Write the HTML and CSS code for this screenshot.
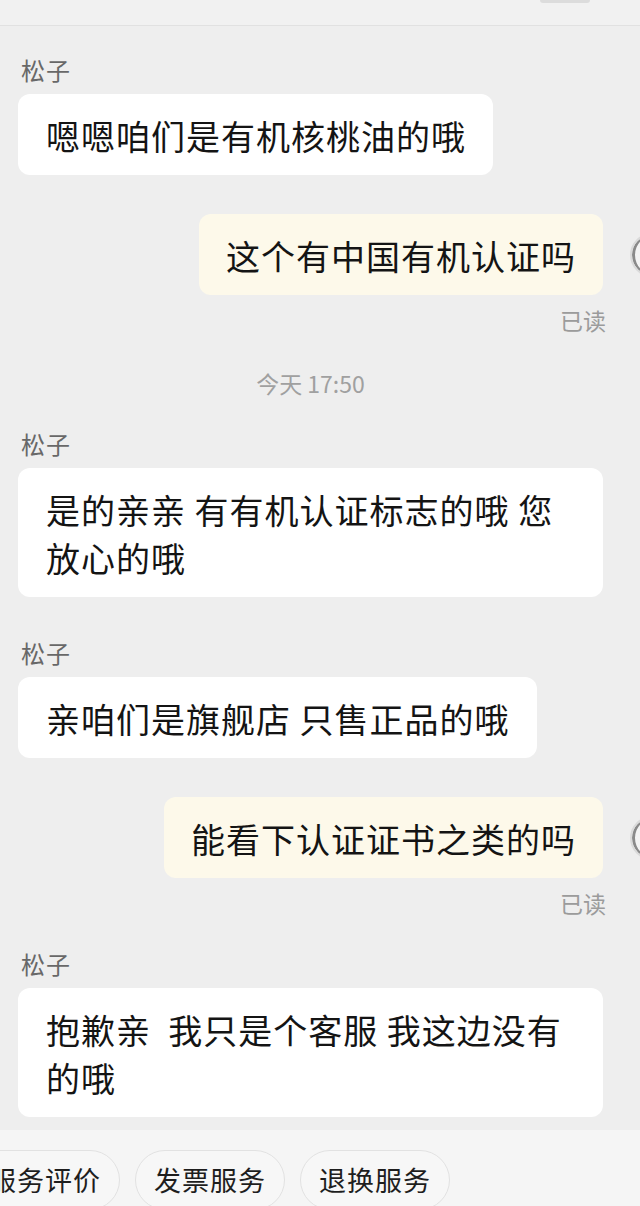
FILE: index.html
```html
<!DOCTYPE html>
<html lang="zh-CN">
<head>
<meta charset="utf-8">
<title>松子</title>
<link rel="stylesheet" href="styles.css">
</head>
<body>
<div class="app">
  <header class="topbar"><span class="topbar-tab"></span></header>
  <main class="chat">
    <div class="msg msg-in first">
      <div class="name">松子</div>
      <div class="bubble">嗯嗯咱们是有机核桃油的哦</div>
    </div>
    <div class="msg msg-out gap-md">
      <div class="row">
        <div class="bubble bubble-out">这个有中国有机认证吗</div>
        <span class="avatar"></span>
      </div>
      <div class="read">已读</div>
    </div>
    <div class="time">今天 17:50</div>
    <div class="msg msg-in gap-sm">
      <div class="name">松子</div>
      <div class="bubble">是的亲亲 有有机认证标志的哦 您放心的哦</div>
    </div>
    <div class="msg msg-in gap-lg">
      <div class="name">松子</div>
      <div class="bubble">亲咱们是旗舰店 只售正品的哦</div>
    </div>
    <div class="msg msg-out gap-md">
      <div class="row">
        <div class="bubble bubble-out">能看下认证证书之类的吗</div>
        <span class="avatar"></span>
      </div>
      <div class="read">已读</div>
    </div>
    <div class="msg msg-in gap-sm">
      <div class="name">松子</div>
      <div class="bubble">抱歉亲&nbsp; 我只是个客服 我这边没有的哦</div>
    </div>
  </main>
  <footer class="bar">
    <span class="pill">服务评价</span>
    <span class="pill">发票服务</span>
    <span class="pill">退换服务</span>
  </footer>
</div>
</body>
</html>
```

FILE: styles.css
```css
* { box-sizing: border-box; }

html, body {
  margin: 0;
  padding: 0;
}

body {
  width: 640px;
  height: 1206px;
  overflow: hidden;
  background: #eeeeee;
  font-family: "Noto Sans CJK SC", "Noto Sans", sans-serif;
  color: #141414;
}

.app {
  width: 640px;
  height: 1206px;
  display: flex;
  flex-direction: column;
  overflow: hidden;
}

.topbar {
  flex: 0 0 26px;
  background: #f1f1f1;
  border-bottom: 1px solid #e1e1e1;
  display: flex;
  justify-content: flex-end;
  align-items: flex-start;
  padding-right: 50px;
}

.topbar-tab {
  width: 50px;
  height: 3px;
  background: #dcdcdc;
  border-radius: 0 0 3px 3px;
}

.chat {
  flex: 1 1 auto;
  padding: 29px 37px 0 18px;
  overflow: hidden;
}

.msg { display: flex; flex-direction: column; }
.msg-in { align-items: flex-start; }
.msg-out { align-items: flex-end; }

.gap-sm { margin-top: 32px; }
.gap-md { margin-top: 39px; }
.gap-lg { margin-top: 41px; }

.name {
  font-size: 24px;
  line-height: 30px;
  color: #686868;
  padding-left: 3px;
  letter-spacing: 1px;
  margin-bottom: 9px;
}

.bubble {
  background: #ffffff;
  border-radius: 12px;
  padding: 18px 27px 15px 28px;
  font-size: 34px;
  line-height: 48px;
  letter-spacing: 1px;
  max-width: 585px;
}

.bubble-out {
  background: #fdf9ea;
  padding-left: 27px;
}

.row {
  display: flex;
  justify-content: flex-end;
  align-items: center;
}

.avatar {
  flex: 0 0 44px;
  width: 44px;
  height: 44px;
  margin-left: 27px;
  margin-right: -71px;
  border-radius: 50%;
  background: #f3f3f3;
  border: 2px solid #dadada;
  box-shadow: inset 3px 0 0 #8a8a8a;
}

.read {
  margin-top: 11px;
  margin-right: -3px;
  font-size: 23px;
  line-height: 28px;
  color: #9b9b9b;
  letter-spacing: 0;
}

.time {
  margin-top: 35px;
  text-align: center;
  font-size: 23px;
  line-height: 28px;
  color: #a0a0a0;
}

.bar {
  flex: 0 0 76px;
  background: #f5f5f5;
  display: flex;
  gap: 15px;
  padding-top: 20px;
  margin-left: -30px;
  overflow: hidden;
}

.pill {
  flex: 0 0 auto;
  height: 60px;
  padding: 0 18px;
  border: 1px solid #e2e2e2;
  border-radius: 30px;
  background: #f7f7f7;
  font-size: 27px;
  line-height: 58px;
  letter-spacing: 1px;
  color: #1e1e1e;
}
```
